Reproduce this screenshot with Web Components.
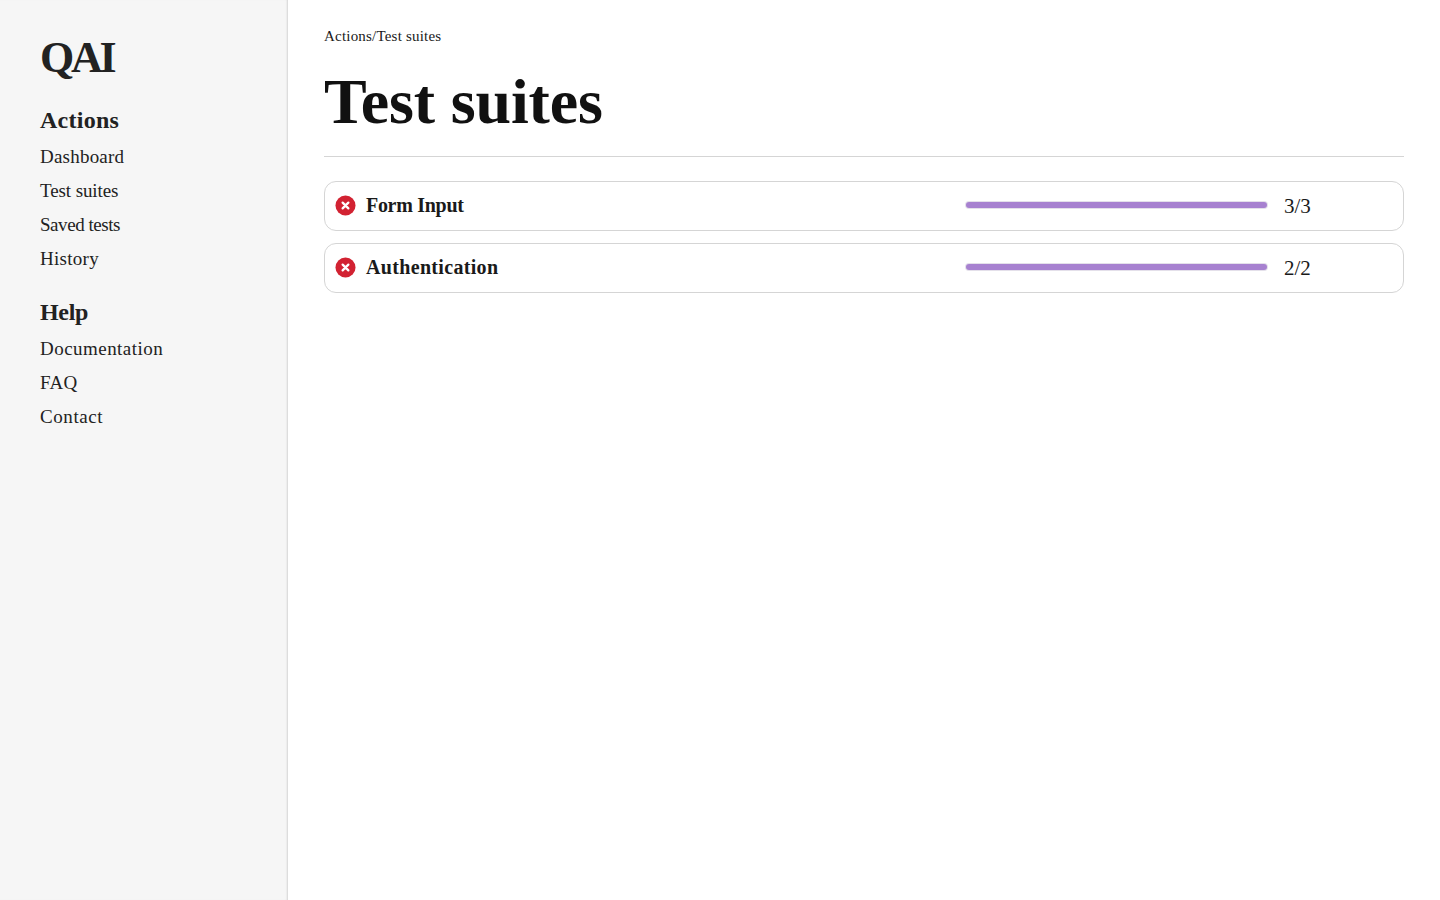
<!DOCTYPE html>
<html><head><meta charset="utf-8"><style>
html,body{margin:0;height:100%;background:#fff}
body{font-family:"Liberation Serif",serif;color:#1a1a1a}
</style></head><body>
<template id="t-layout"><style>
:host{display:flex;height:900px}
.side{width:288px;flex:none;box-sizing:border-box;background:#f6f6f6;box-shadow:inset -2px 0 2px -1px rgba(0,0,0,.14);padding:30px 40px}
.main{flex:1;min-width:0;padding:24px 36px}
</style><div class="side"><slot name="side"></slot></div><div class="main"><slot></slot></div></template>
<template id="t-nav"><style>
:host{display:block;margin-bottom:20px}
h2{font:bold 24px/32px "Liberation Serif",serif;margin:0 0 4px;color:#222}
::slotted(a){display:block;font:19px/34px "Liberation Serif",serif;color:#222}
</style><h2></h2><slot></slot></template>
<template id="t-row"><style>
:host{display:flex;align-items:center;height:50px;box-sizing:border-box;border:1px solid #d5d5d5;border-radius:12px;margin-bottom:12px;padding-left:10px}
svg{width:21px;height:21px;flex:none;margin-top:-1px}
.n{font:bold 20px "Liberation Serif",serif;margin-left:10px;flex:none;width:599.5px;padding-bottom:2px}
.b{width:301.5px;height:6px;border-radius:3px;background:#a781d0;box-shadow:0 0 0 1px #e4e0ea;flex:none;margin-top:-2px}
.c{font:21px "Liberation Serif",serif;margin-left:17px}
</style><svg viewBox="0 0 22 22"><circle cx="11" cy="11" r="10.5" fill="#d22232"/><path d="M8 8l6 6M14 8l-6 6" stroke="#fff" stroke-width="2.4" stroke-linecap="round"/></svg><span class="n"></span><span class="b"></span><span class="c"></span></template>
<qa-layout>
<div slot="side">
<div style="font:bold 44px/56px 'Liberation Serif',serif;margin-bottom:18px;letter-spacing:-3.2px;color:#222">QAI</div>
<qa-nav label="Actions" spacing=".25px"><a style="letter-spacing:.22px">Dashboard</a><a style="letter-spacing:-.1px">Test suites</a><a style="letter-spacing:-.45px">Saved tests</a><a style="letter-spacing:.28px">History</a></qa-nav>
<qa-nav label="Help" spacing="-.3px"><a style="letter-spacing:.46px">Documentation</a><a style="letter-spacing:.3px">FAQ</a><a style="letter-spacing:.57px">Contact</a></qa-nav>
</div>
<div style="font:15px/24px 'Liberation Serif',serif;letter-spacing:.2px">Actions/Test suites</div>
<h1 style="font:bold 64px/76px 'Liberation Serif',serif;margin:16px 0 24px;padding-bottom:16px;border-bottom:1px solid #d5d5d5;letter-spacing:-.14px;color:#111">Test suites</h1>
<qa-row name="Form Input" count="3/3" spacing="-.3px"></qa-row>
<qa-row name="Authentication" count="2/2" spacing=".33px"></qa-row>
</qa-layout>
<script>
class Base extends HTMLElement{
  constructor(id){super();this.attachShadow({mode:'open'}).append(document.getElementById(id).content.cloneNode(true))}
}
class L extends Base{constructor(){super('t-layout')}}
class N extends Base{constructor(){super('t-nav')}
  connectedCallback(){const h=this.shadowRoot.querySelector('h2');h.textContent=this.getAttribute('label');h.style.letterSpacing=this.getAttribute('spacing')}}
class R extends Base{constructor(){super('t-row')}
  connectedCallback(){const n=this.shadowRoot.querySelector('.n');n.textContent=this.getAttribute('name');n.style.letterSpacing=this.getAttribute('spacing');this.shadowRoot.querySelector('.c').textContent=this.getAttribute('count')}}
customElements.define('qa-layout',L);customElements.define('qa-nav',N);customElements.define('qa-row',R);
</script></body></html>
